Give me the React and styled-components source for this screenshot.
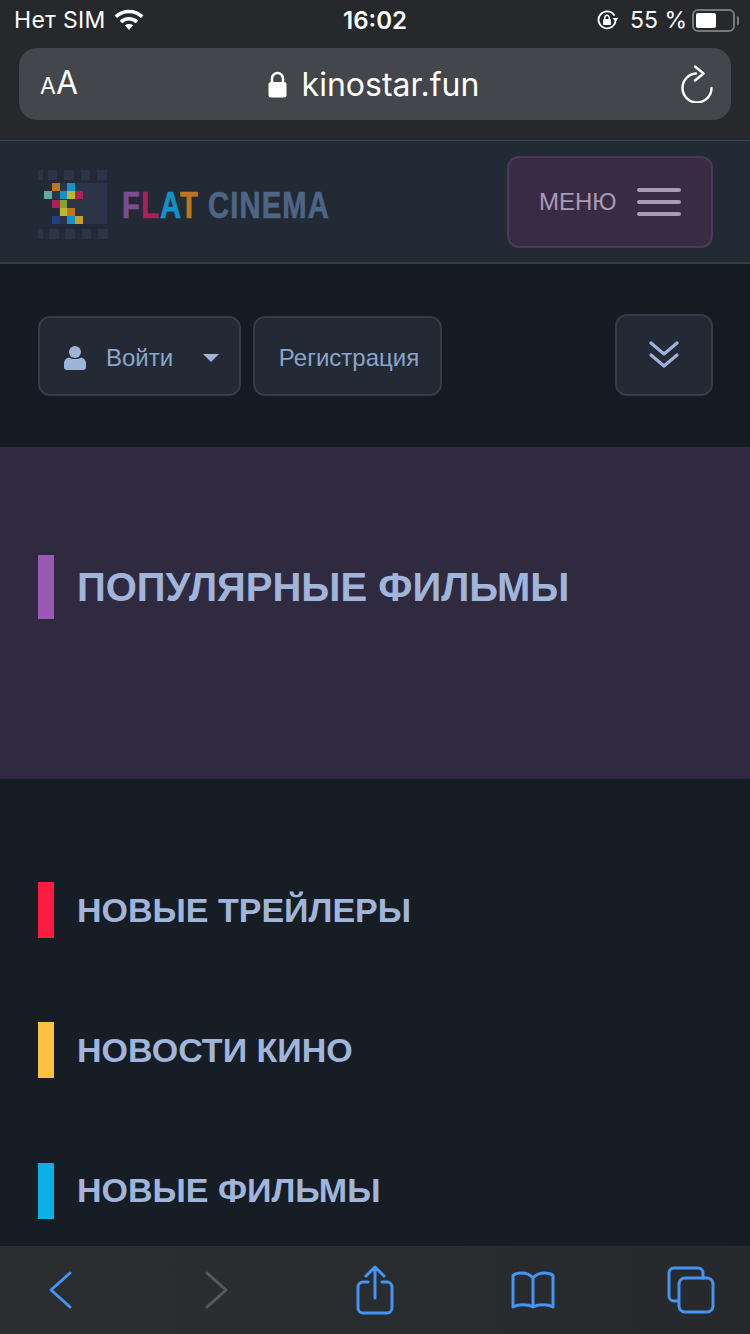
import * as React from 'react';
import styled, { createGlobalStyle } from 'styled-components';

const GlobalStyle = createGlobalStyle`
  html, body {
    margin: 0;
    padding: 0;
    background: #161d25;
  }
  * {
    box-sizing: border-box;
  }
`;

const Page = styled.div`
  width: 750px;
  height: 1334px;
  display: flex;
  flex-direction: column;
  overflow: hidden;
  background: #161d25;
  font-family: "Liberation Sans", Arial, sans-serif;
`;

const BrowserChrome = styled.div`
  height: 141px;
  flex: none;
  background: #26282c;
  border-bottom: 1px solid #3a424d;
  color: #fff;
`;

const StatusBar = styled.div`
  height: 48px;
  padding: 0 15px 8px 14px;
  display: flex;
  align-items: center;
  justify-content: space-between;
  font-family: Inter, "Liberation Sans", sans-serif;
  font-size: 23px;
  position: relative;
`;

const StatusGroup = styled.div`
  display: flex;
  align-items: center;
  gap: ${p => p.$gap || 0}px;
`;

const CarrierName = styled.span`
  letter-spacing: 0.3px;
`;

const Clock = styled.div`
  position: absolute;
  left: 0;
  right: 0;
  top: 7px;
  text-align: center;
  font-weight: 600;
  font-size: 24px;
  line-height: 28px;
`;

const Battery = styled.div`
  width: 43px;
  height: 23px;
  margin-left: -6px;
  border: 2px solid #77797c;
  border-radius: 6px;
  padding: 2px;
  position: relative;
  &::after {
    content: '';
    position: absolute;
    right: -6px;
    top: 5px;
    width: 2px;
    height: 9px;
    border-radius: 0 2px 2px 0;
    background: #77797c;
  }
`;

const BatteryLevel = styled.div`
  height: 100%;
  background: #fff;
  border-radius: 2px;
`;

const UrlBar = styled.div`
  height: 72px;
  margin: 0 19px;
  padding: 0 18px 0 21px;
  display: flex;
  align-items: center;
  justify-content: space-between;
  border-radius: 18px;
  background: #43464b;
  font-family: Inter, "Liberation Sans", sans-serif;
`;

const TextSize = styled.div`
  display: flex;
  align-items: baseline;
  width: 40px;
  font-size: 32px;
  line-height: 36px;
  span {
    font-size: 23px;
  }
`;

const Address = styled.div`
  display: flex;
  align-items: center;
  gap: 15px;
  font-size: 32px;
  margin-right: 14px;
`;

const SiteHeader = styled.header`
  height: 123px;
  flex: none;
  padding: 15px 37px 0 38px;
  display: flex;
  justify-content: space-between;
  background: #222a35;
  border-bottom: 2px solid #343c46;
`;

const LogoLink = styled.div`
  display: flex;
  align-items: flex-start;
  padding-top: 14px;
`;

const LogoText = styled.div`
  margin: 14px 0 0 14px;
  width: 206px;
  font-size: 36px;
  line-height: 44px;
  font-weight: 700;
  color: #4f6585;
  white-space: nowrap;
  transform: scaleX(0.81);
  transform-origin: left center;
  letter-spacing: 1.4px;
  -webkit-text-stroke: 0.7px currentColor;
`;

const LogoLetter = styled.span`
  color: ${p => p.$color};
`;

const MenuButton = styled.div`
  width: 206px;
  height: 92px;
  padding: 0 30px;
  display: flex;
  align-items: center;
  justify-content: space-between;
  background: #3a2b45;
  border: 2px solid #4a3a58;
  border-radius: 12px;
  color: #a89bb5;
  font-size: 24px;
`;

const Burger = styled.div`
  width: 44px;
  display: flex;
  flex-direction: column;
  gap: 8px;
`;

const BurgerLine = styled.div`
  height: 4px;
  border-radius: 2px;
  background: #a89bb5;
`;

const AuthBar = styled.div`
  height: 183px;
  flex: none;
  padding: 52px 37px 0 38px;
  display: flex;
  align-items: flex-start;
  gap: 12px;
  background: #141b22;
`;

const AuthButton = styled.div`
  height: ${p => p.$square ? 82 : 80}px;
  width: ${p => p.$width}px;
  margin-top: ${p => p.$square ? -2 : 0}px;
  margin-left: ${p => p.$square ? 'auto' : 0};
  padding-top: ${p => p.$square ? 0 : 3}px;
  display: flex;
  align-items: center;
  justify-content: ${p => p.$center ? 'center' : 'flex-start'};
  background: #232a35;
  border: 2px solid #353c47;
  border-radius: 12px;
  color: #8ba5cb;
  font-size: 24px;
`;

const RegisterLabel = styled.span`
  margin-left: 3px;
`;

const UserIcon = styled.svg`
  margin: 0 20px 0 24px;
  flex: none;
`;

const Caret = styled.div`
  margin-left: 30px;
  width: 0;
  height: 0;
  border-left: 8px solid transparent;
  border-right: 8px solid transparent;
  border-top: 8px solid #9db4d8;
`;

const PopularSection = styled.section`
  height: 332px;
  flex: none;
  padding-top: 108px;
  background: #2f2a40;
`;

const Content = styled.main`
  flex: 1;
  min-height: 0;
  padding-top: 103px;
  display: flex;
  flex-direction: column;
  gap: 84.4px;
`;

const Heading = styled.h2`
  margin: 0 0 0 38px;
  height: ${p => p.$size}px;
  display: flex;
  align-items: center;
  gap: 23px;
  font-size: ${p => p.$font}px;
  font-weight: 700;
  color: #a0b5d9;
  text-transform: uppercase;
  &::before {
    content: '';
    width: 16px;
    height: 100%;
    background: ${p => p.$color};
  }
`;

const Toolbar = styled.nav`
  height: 88px;
  flex: none;
  display: grid;
  grid-template-columns: 157px 151px 155px 157px 48px;
  align-items: center;
  padding-left: 47px;
  background: linear-gradient(90deg, #2b2d2f, #2a2d30 40%, #27292d);
`;

const ToolIcon = styled.svg`
  display: block;
  fill: none;
  stroke: ${p => p.$off ? '#58595b' : '#4494f5'};
  stroke-width: ${p => p.$w || 3};
  stroke-linecap: round;
  stroke-linejoin: round;
`;

const Wifi = () => (
  <svg width="30" height="22" viewBox="0 0 30 22" fill="none" stroke="#fff" strokeWidth="3.600">
    <path d="M1.800 7.800A19 19 0 0 1 28.200 7.800" />
    <path d="M7 13A11.500 11.500 0 0 1 23 13" />
    <path d="M10.800 16.300Q15 13.800 19.200 16.300L15 21z" fill="#fff" stroke="none" />
  </svg>
);

const RotationLock = () => (
  <svg width="22" height="20" viewBox="0 0 22 20" fill="none">
    <path d="M17 5A8.500 8.500 0 1 0 18.500 10.500" stroke="#fff" strokeWidth="1.800" strokeLinecap="round" />
    <path d="M15.500 8h6l-3 3.500z" fill="#fff" />
    <rect x="6" y="9" width="8" height="6" rx="1" fill="#fff" />
    <path d="M7.800 9.500V7.500a2.200 2.200 0 0 1 4.400 0v2" stroke="#fff" strokeWidth="1.400" />
  </svg>
);

const Lock = () => (
  <svg width="19" height="27" viewBox="0 0 19 27" fill="none">
    <path d="M4 12V7.500a5.500 5.500 0 0 1 11 0V12" stroke="#fff" strokeWidth="2.500" />
    <rect x="0.500" y="11" width="18" height="15.500" rx="2.500" fill="#fff" />
  </svg>
);

const Reload = () => (
  <svg width="32" height="38" viewBox="0 0 32 38" fill="none" stroke="#fff" strokeWidth="2.400" strokeLinecap="round" strokeLinejoin="round">
    <path d="M15 8.500A14.500 14.500 0 1 0 30.500 23" />
    <path d="M14 1.500l8.500 7-8.500 7" />
  </svg>
);

const Cell = ({ x, y, c, w = 8 }) => <rect x={x} y={y} width={w} height="8" fill={c} />;

const LogoMark = () => (
  <svg width="70" height="70" viewBox="38 170 70 70">
    {[[38, 5], [48, 9], [64, 10], [81, 9], [97, 10]].map(([x, w]) => (
      <rect key={x} x={x} y="170" width={w} height="10" fill="#2b3547" />
    ))}
    <rect x="59" y="183" width="48" height="41" fill="#2b3547" />
    <Cell x={52} y={183} c="#bf7420" />
    <Cell x={67} y={183} c="#1093cb" />
    <Cell x={44} y={191} c="#62a8a8" />
    <Cell x={52} y={191} c="#2b3547" />
    <Cell x={60} y={191} w={7} c="#1093cb" />
    <Cell x={67} y={191} c="#bdb62c" />
    <Cell x={75} y={191} c="#ac2159" />
    <Cell x={52} y={200} c="#ac2159" />
    <Cell x={60} y={200} w={7} c="#85a12f" />
    <Cell x={60} y={208} w={7} c="#bdb62c" />
    <Cell x={67} y={208} c="#bf7420" />
    <Cell x={52} y={216} c="#1f3f85" />
    <Cell x={67} y={216} c="#1093cb" />
    <Cell x={75} y={216} c="#c6a02a" />
    {[[38, 5], [49, 10], [65, 10], [82, 9], [98, 10]].map(([x, w]) => (
      <rect key={x} x={x} y="229" width={w} height="10" fill="#2b3547" />
    ))}
  </svg>
);

const HEADINGS = [
  { title: 'Новые трейлеры', color: '#ff1a3f' },
  { title: 'Новости кино', color: '#ffc140' },
  { title: 'Новые фильмы', color: '#0bb0e6' }
];

export default function App() {
  return (
    <Page>
      <GlobalStyle />
      <BrowserChrome>
        <StatusBar>
          <StatusGroup $gap={8}>
            <CarrierName>Нет SIM</CarrierName>
            <Wifi />
          </StatusGroup>
          <Clock>16:02</Clock>
          <StatusGroup $gap={11}>
            <RotationLock />
            <span>55 %</span>
            <Battery>
              <BatteryLevel style={{ width: '58%' }} />
            </Battery>
          </StatusGroup>
        </StatusBar>
        <UrlBar>
          <TextSize><span>A</span>A</TextSize>
          <Address>
            <Lock />
            <span>kinostar.fun</span>
          </Address>
          <Reload />
        </UrlBar>
      </BrowserChrome>

      <SiteHeader>
        <LogoLink>
          <LogoMark />
          <LogoText>
            <LogoLetter $color="#7d4c96">F</LogoLetter>
            <LogoLetter $color="#ac2159">L</LogoLetter>
            <LogoLetter $color="#1093cb">A</LogoLetter>
            <LogoLetter $color="#bf7420">T</LogoLetter>
            {' CINEMA'}
          </LogoText>
        </LogoLink>
        <MenuButton>
          МЕНЮ
          <Burger>
            <BurgerLine />
            <BurgerLine />
            <BurgerLine />
          </Burger>
        </MenuButton>
      </SiteHeader>

      <AuthBar>
        <AuthButton $width={203}>
          <UserIcon width="22" height="24" viewBox="0 0 22 24" fill="#9db4d8">
            <circle cx="11" cy="6" r="6" />
            <path d="M5 11.500c3 2 9 2 12 0 3 .5 5 3 5 6V21a3 3 0 0 1-3 3H3a3 3 0 0 1-3-3v-3.500c0-3 2-5.500 5-6z" />
          </UserIcon>
          Войти
          <Caret />
        </AuthButton>
        <AuthButton $width={189} $center>
          <RegisterLabel>Регистрация</RegisterLabel>
        </AuthButton>
        <AuthButton $width={98} $square $center>
          <svg width="32" height="28" viewBox="0 0 30 28" fill="none" stroke="#9db4d8" strokeWidth="3.200" strokeLinecap="round" strokeLinejoin="round">
            <path d="M2 2l13 11L28 2" />
            <path d="M2 14l13 11 13-11" />
          </svg>
        </AuthButton>
      </AuthBar>

      <PopularSection>
        <Heading $size={64} $font={40} $color="#9b59b6">Популярные фильмы</Heading>
      </PopularSection>

      <Content>
        {HEADINGS.map(h => (
          <Heading key={h.title} $size={56} $font={34} $color={h.color}>{h.title}</Heading>
        ))}
      </Content>

      <Toolbar>
        <ToolIcon width="26" height="40" viewBox="0 0 26 40">
          <path d="M23 3L4 20l19 17" />
        </ToolIcon>
        <ToolIcon $off width="26" height="40" viewBox="0 0 26 40">
          <path d="M3 3l19 17L3 37" />
        </ToolIcon>
        <ToolIcon width="40" height="50" viewBox="0 0 40 50">
          <path d="M13 17H8a5 5 0 0 0-5 5v21a5 5 0 0 0 5 5h24a5 5 0 0 0 5-5V22a5 5 0 0 0-5-5h-5" />
          <path d="M20 33V3M11 11l9-9 9 9" />
        </ToolIcon>
        <ToolIcon width="46" height="40" viewBox="0 0 46 40">
          <path d="M23 8c-3-4-8-5-12-5-3 0-6 .8-8 2.500V37c5-3 15-3 20 0 5-3 15-3 20 0V5.500C41 3.800 38 3 35 3c-4 0-9 1-12 5zM23 8v29" />
        </ToolIcon>
        <ToolIcon width="48" height="48" viewBox="0 0 48 48">
          <path d="M36 12V7a5 5 0 0 0-5-5H7a5 5 0 0 0-5 5v23a5 5 0 0 0 5 5h4" />
          <rect x="12" y="12" width="34" height="34" rx="6" />
        </ToolIcon>
      </Toolbar>
    </Page>
  );
}
